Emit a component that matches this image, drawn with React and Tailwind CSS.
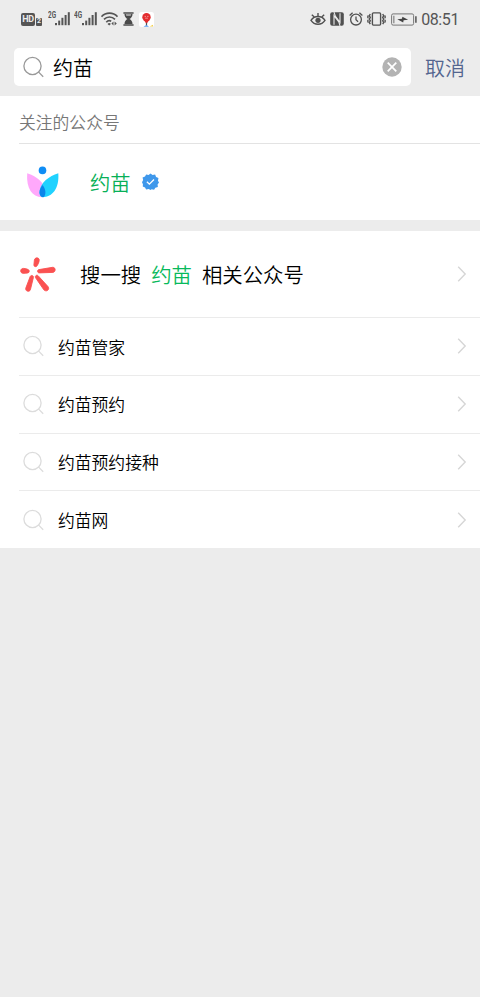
import { clsx } from 'clsx';

const suggestions = ['约苗管家', '约苗预约', '约苗预约接种', '约苗网'];

function SignalIcon({ className }) {
  return (
    <svg className={clsx('shrink-0', className)} width="15" height="14" viewBox="0 0 15 14" fill="#555">
      <rect x="0" y="11" width="2" height="2.2" />
      <rect x="3.2" y="8.6" width="2" height="4.6" />
      <rect x="6.4" y="5.8" width="2" height="7.4" />
      <rect x="9.6" y="3" width="2" height="10.2" />
      <rect x="12.8" y="0.2" width="2" height="13" />
    </svg>
  );
}

function WifiIcon() {
  return (
    <svg className="ml-1 shrink-0" width="17" height="14" viewBox="0 0 17 14" fill="none" stroke="#555" strokeWidth="1.7">
      <path d="M0.5 4.6C4.8 -0.1 12.2 -0.1 16.5 4.6" />
      <path d="M3 7.4c3.1-3.2 7.9-3.2 11 0" />
      <path d="M5.3 10.2c1.4-1.6 3.4-1.8 4.9-1" />
      <path d="M8.2 13.6 6.5 11.9a2.4 2.4 0 0 1 3.4 0z" fill="#555" stroke="none" />
      <path d="M12.5 9.4v4.2l-2.1-2.1zM13.6 9.4v4.2l2.2-2.1z" fill="#555" stroke="none" />
    </svg>
  );
}

function HourglassIcon() {
  return (
    <svg className="ml-[5px] shrink-0" width="11" height="14" viewBox="0 0 11 14" fill="#4a4a4a">
      <path d="M0.4 0.3h10.2v1.4H0.4zM0.4 12.3h10.2v1.4H0.4z" />
      <path d="M1.5 2h8c0 2.4-1.2 4-3 5 1.8 1 3 2.6 3 5h-8c0-2.4 1.2-4 3-5-1.8-1-3-2.6-3-5z" />
      <path d="M2.8 2.3h5.4l-.5 1.5H3.3z" fill="#bbb" />
    </svg>
  );
}

function MapAppIcon() {
  return (
    <svg className="ml-[5px] shrink-0" width="15" height="15" viewBox="0 0 15 15">
      <rect width="15" height="15" rx="2.5" fill="#fff" />
      <path d="M4.5 14.8 7.5 12.8l2.5 2z" fill="#5a9ff2" />
      <path d="M10.5 14.5 14 12.8v1.7z" fill="#f4cf48" />
      <circle cx="7.5" cy="5.2" r="4.2" fill="#e32c2f" />
      <path d="M5.3 8.4h4.4l-1.6 2.8H6.9z" fill="#e32c2f" />
      <path d="M7.5 10.8v2.4" stroke="#555" strokeWidth="1.2" />
      <path d="M5.6 4.4h1.4M8.1 4.4h1.4M6.1 6.2h2.8" stroke="#f4a4a4" strokeWidth="0.8" />
    </svg>
  );
}

function EyeIcon() {
  return (
    <svg className="shrink-0" width="16" height="14" viewBox="0 0 16 14" fill="none" stroke="#505050" strokeWidth="1.4">
      <path d="M1 8.3c3.5-5 10.5-5 14 0-3.5 5.2-10.5 5.2-14 0z" />
      <circle cx="8" cy="8.3" r="2.6" fill="#505050" stroke="none" />
      <path d="M8 4.5V1M4.3 5 1.8 2.8M11.7 5l2.5-2.2" />
    </svg>
  );
}

function NfcIcon() {
  return (
    <svg className="ml-1 shrink-0" width="14" height="14" viewBox="0 0 14 14">
      <rect x="0.2" y="0.2" width="13.6" height="13.6" rx="2" fill="#505050" />
      <path d="M4 12.8V3.6l4.8 6.2 1.2 4" fill="none" stroke="#ececec" strokeWidth="1.1" />
      <path d="M4 .2l1.300 4 4.700 6.200V1.200" fill="none" stroke="#ececec" strokeWidth="1.1" />
    </svg>
  );
}

function AlarmIcon() {
  return (
    <svg className="ml-[5px] shrink-0" width="14" height="14" viewBox="0 0 14 14" fill="none" stroke="#505050" strokeWidth="1.3">
      <circle cx="7" cy="7.6" r="5.4" />
      <path d="M7 4.6v3.2l2.1 1.9M.6 3.5 3.6.8M13.4 3.5 10.4.8" />
    </svg>
  );
}

function VibrateIcon() {
  return (
    <svg className="ml-1 shrink-0" width="19" height="14" viewBox="0 0 19 14" fill="none" stroke="#505050" strokeWidth="1.4">
      <rect x="5.4" y="0.9" width="8.2" height="12.2" rx="1" />
      <path d="m3.3 2-1 1.700 1 1.700-1 1.700 1 1.700-1 1.700 1 1.700M.9 3.6v2.6M.9 7.800v2.600" />
      <path d="m15.700 2 1 1.700-1 1.700 1 1.700-1 1.700 1 1.700-1 1.700M18.1 3.6v2.600M18.1 7.800v2.600" />
    </svg>
  );
}

function BatteryIcon() {
  return (
    <svg className="ml-[5px] shrink-0" width="26" height="13" viewBox="0 0 26 13" fill="none">
      <rect x="0.6" y="0.9" width="22" height="11.2" rx="1.5" stroke="#777" />
      <path d="M2.8 2.7v7.6" stroke="#999" strokeWidth="1.5" />
      <path d="M6.3 6.2 11 5.8l.4-2.1 5.7 3.1-4.5.4-.4 2.2z" fill="#444" />
      <path d="M24.9 3.3v6.4" stroke="#555" strokeWidth="1.5" />
    </svg>
  );
}

function SearchIcon({ className }) {
  return (
    <svg className={clsx('shrink-0', className)} width="22" height="22" viewBox="0 0 22 22" fill="none" stroke="currentColor" strokeWidth="1.3">
      <circle cx="9.5" cy="10" r="8.6" />
      <path d="m15.4 15.9 4.800 4.800" />
    </svg>
  );
}

function ChevronIcon() {
  return (
    <svg className="ml-auto mr-[13px] shrink-0" width="10" height="18" viewBox="0 0 10 18" fill="none" stroke="#d6d6d6" strokeWidth="1.4">
      <path d="m1.2 1.8 7 7.2-7 7.2" />
    </svg>
  );
}

function FlowerLogo() {
  return (
    <svg className="mt-px shrink-0" width="34" height="34" viewBox="0 0 34 34">
      <circle cx="16.5" cy="4.4" r="3.8" fill="#0f8df5" />
      <path d="M1.200 7.200C10.500 10 18.500 16.500 19.500 25.500c.2 3-1.300 5.500-3.700 5.700C6.300 31 .1 22.500 1.200 7.200z" fill="#ffa8fb" />
      <path d="M32.300 7.200C23 10 14.500 16.500 13.500 25.500c-.2 3 1 5.500 3 5.700 10-.2 16.900-8.700 15.800-24z" fill="#20d2ff" />
      <path d="M16.600 19c2 2.800 3 5.500 2.800 8-.2 2.300-1 3.700-2.300 4.200-2.200-.2-3.600-2-3.600-4.700 0-2.700 1.200-5.100 3.100-7.500z" fill="#0b85ea" />
    </svg>
  );
}

function VerifiedBadge() {
  return (
    <svg className="-mt-[2px] ml-[11px] shrink-0" width="17" height="17" viewBox="0 0 18 18">
      <path
        d="m9 .5 2.200 1.700 2.700-.5 1 2.600 2.500 1.100-.5 2.700L18 10l-1.500 2.200.3 2.600-2.700.9-1.300 2.100-2.600-.6L9 18l-1.900-1.100-2.700.6-1.200-2.100-2.400-1.100.2-2.500L0 9.700l1.200-2.300-.6-2.600 2.600-1 1.200-2.200 2.600.6z"
        fill="#3f98eb"
      />
      <path d="m5.200 9.300 2.600 2.500 4.900-4.900" fill="none" stroke="#fff" strokeWidth="1.4" />
    </svg>
  );
}

function SparkLogo() {
  return (
    <svg className="mt-px shrink-0" width="36" height="36" viewBox="0 0 36 36" fill="#fa5151" stroke="#fa5151" strokeWidth="0.9">
      <path d="M14.400 3.100c.5-3.300 5.200-2.800 4.800.3-.2 2-1.200 3.900-2.100 5.400-1 1.400-3.200 1-3.200-.7z" />
      <path d="M3.200 11.400c1.900 0 3.600.4 5.100 1.200 1.500.8 1.100 3.200-.5 3.300-1.600.2-3.200.6-4.900.4-3.200-.4-2.800-4.900.3-4.900z" />
      <path d="m19 12.600 13.600-2.300c3.300-.2 3.400 4.800.3 5.100l-13.600.5c-2.200 0-2.500-2.900-.3-3.300z" />
      <path d="M10.200 19.500c.8-1.900 3.700-1 3.200 1l-3 12.200c-1 2.800-5.500 1.600-4.600-1.600z" />
      <path d="M15.600 20.800c-1.100-1.900 1.300-3.500 2.700-1.900l9.700 10.700c2.200 2.900-1.600 5.900-4.200 3.200z" />
    </svg>
  );
}

function StatusBar() {
  return (
    <div className="flex h-[38px] items-center pl-[21px] pr-[21px] font-[Roboto,sans-serif] font-normal text-[#555]">
      <span className="flex h-[13px] w-[14px] items-center justify-center rounded-[2px] bg-[#555] text-[9px] font-bold leading-none tracking-[-0.3px] text-[#ececec]">
        HD
      </span>
      <span className="ml-[1px] mt-[5px] flex h-2 w-[6px] items-center justify-center rounded-[1px] bg-[#555] text-[7px] font-bold leading-none text-[#ececec]">
        2
      </span>
      <span className="-mt-[7px] ml-[6px] w-[8px] origin-left scale-x-75 text-[8.5px] font-bold leading-none">2G</span>
      <SignalIcon className="-ml-px" />
      <span className="-mt-[7px] ml-[4px] w-[9px] origin-left scale-x-75 text-[8.5px] font-bold leading-none">4G</span>
      <SignalIcon className="-ml-px" />
      <WifiIcon />
      <HourglassIcon />
      <MapAppIcon />
      <div className="ml-auto flex items-center">
        <EyeIcon />
        <NfcIcon />
        <AlarmIcon />
        <VibrateIcon />
        <BatteryIcon />
        <span className="ml-[4px] pt-[2px] text-[16px] leading-none tracking-[-0.4px]">08:51</span>
      </div>
    </div>
  );
}

function SearchHeader() {
  return (
    <div className="flex h-[58px] items-center pb-[1px] pl-[14px]">
      <div className="flex h-[38px] w-[397px] items-center rounded-[5px] bg-white pl-[9px] pr-[9px]">
        <SearchIcon className="text-[#999]" />
        <span className="ml-2 pt-[2px] text-[20px] leading-none text-black">约苗</span>
        <svg className="ml-auto" width="20" height="20" viewBox="0 0 20 20">
          <circle cx="10" cy="10" r="9.7" fill="#b3b3b3" />
          <path d="m5.700 5.700 8.600 8.600m0-8.600-8.600 8.600" stroke="#fff" strokeWidth="1.7" />
        </svg>
      </div>
      <button className="ml-[14px] pt-[2px] text-[20px] leading-none text-[#53658f]">取消</button>
    </div>
  );
}

export default function App() {
  return (
    <div className="min-h-screen w-[480px] bg-[#ececec] font-['Noto_Sans_CJK_SC',sans-serif] font-[350] text-black">
      <StatusBar />
      <SearchHeader />

      {/* Followed accounts */}
      <section className="bg-white">
        <div className="ml-[19px] flex h-12 items-center border-b border-[#e3e3e3] pt-[6px] text-[16.8px] leading-none text-[#777]">
          关注的公众号
        </div>
        <div className="flex h-[76px] items-center pl-[26px]">
          <FlowerLogo />
          <span className="ml-[30px] text-[20.3px] leading-none text-[#07b057]">约苗</span>
          <VerifiedBadge />
        </div>
      </section>

      {/* Search suggestions */}
      <section className="mt-[11px] bg-white">
        <div className="flex h-[86px] items-center pl-5">
          <SparkLogo />
          <span className="ml-6 flex gap-[10px] pt-[1px] text-[20.4px] leading-none">
            搜一搜<span className="text-[#07b95b]">约苗</span>相关公众号
          </span>
          <ChevronIcon />
        </div>
        {suggestions.map((item) => (
          <div key={item} className="ml-[19px] flex h-[57.75px] items-center border-t border-[#ebebeb] pl-1">
            <SearchIcon className="text-[#dcdcdc]" />
            <span className="ml-[13px] pt-[1.5px] text-[16.8px] leading-none">{item}</span>
            <ChevronIcon />
          </div>
        ))}
      </section>
    </div>
  );
}
